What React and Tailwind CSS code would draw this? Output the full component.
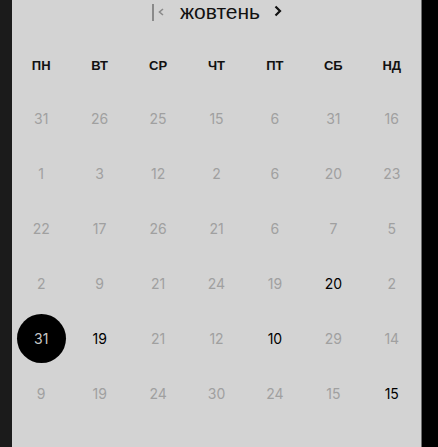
const DAYS = ['ПН', 'ВТ', 'СР', 'ЧТ', 'ПТ', 'СБ', 'НД'];

// n: number, d: dark (current month), s: selected
const ROWS = [
  [31, 26, 25, 15, 6, 31, 16],
  [1, 3, 12, 2, 6, 20, 23],
  [22, 17, 26, 21, 6, 7, 5],
  [2, 9, 21, 24, 19, { n: 20, d: true }, 2],
  [{ n: 31, s: true }, { n: 19, d: true }, 21, 12, { n: 10, d: true }, 29, 14],
  [9, 19, 24, 30, 24, 15, { n: 15, d: true }],
];

function Cell({ value }) {
  const v = typeof value === 'number' ? { n: value } : value;
  if (v.s) {
    return (
      <div className="flex h-[55px] items-center justify-center">
        <div className="flex h-[49px] w-[49px] items-center justify-center rounded-full bg-black text-[14px] text-[#c8c8c8]">
          {v.n}
        </div>
      </div>
    );
  }
  return (
    <div className={`flex h-[55px] items-center justify-center text-[14px] ${v.d ? 'text-black' : 'text-[#a0a0a0]'}`}>
      {v.n}
    </div>
  );
}

export default function App() {
  return (
    <div className="flex h-[447px] w-[438px] bg-black" style={{ fontFamily: "Inter, 'Liberation Sans', sans-serif" }}>
      <div className="w-[12px] bg-[#1b1b1b]" />
      <div className="w-[409px] bg-[#d3d3d3]">
        <div className="flex h-[40px] items-start justify-center pl-[2px] pt-[1px]">
          <div className="flex items-center">
            <div className="h-[17px] w-[2px] bg-[#8a8a8a]" />
            <svg width="10" height="10" viewBox="0 0 10 10" className="ml-[2px]">
              <path d="M7 2 L3.5 5 L7 8" fill="none" stroke="#8a8a8a" strokeWidth="1.6" />
            </svg>
            <span className="ml-[14px] mr-[13px] text-[21px] leading-[22px] text-[#111]" style={{ fontFamily: "'Liberation Sans', Arial, sans-serif" }}>
              жовтень
            </span>
            <svg width="10" height="12" viewBox="0 0 10 12" className="mb-[2px]">
              <path d="M2.5 1.5 L7 6 L2.5 10.5" fill="none" stroke="#111" strokeWidth="2.2" />
            </svg>
          </div>
        </div>
        <div className="grid h-[51px] grid-cols-7 items-center" style={{ fontFamily: "'Liberation Sans', Arial, sans-serif" }}>
          {DAYS.map((d) => (
            <div key={d} className="text-center text-[13px] font-bold text-[#111]">
              {d}
            </div>
          ))}
        </div>
        {ROWS.map((row, i) => (
          <div key={i} className="grid grid-cols-7">
            {row.map((v, j) => (
              <Cell key={j} value={v} />
            ))}
          </div>
        ))}
      </div>
      <div className="w-[1px] bg-[#6e6e6e]" />
    </div>
  );
}
